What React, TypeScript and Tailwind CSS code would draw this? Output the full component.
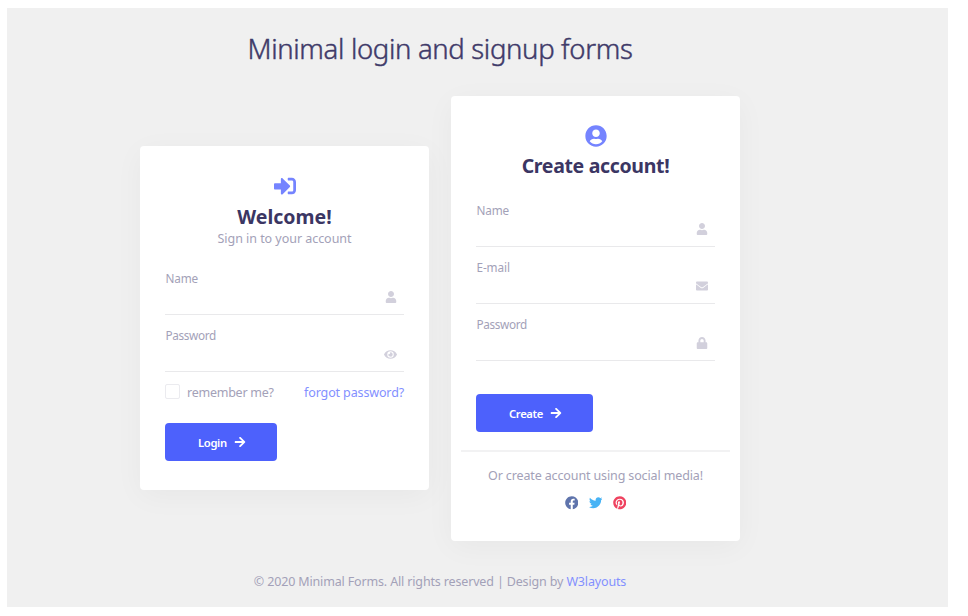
import type { ReactNode } from "react";
import {
  FaArrowRight,
  FaEnvelope,
  FaEye,
  FaFacebook,
  FaLock,
  FaPinterest,
  FaSignInAlt,
  FaTwitter,
  FaUser,
  FaUserCircle,
} from "react-icons/fa";

function Card({ className, children }: { className: string; children: ReactNode }) {
  return (
    <section
      className={`flex w-[289px] flex-col rounded bg-white px-[25px] shadow-[0_6px_30px_rgba(0,10,10,0.04)] ${className}`}
    >
      {children}
    </section>
  );
}

function Field({ label, icon, className }: { label: string; icon: ReactNode; className: string }) {
  return (
    <div className="flex h-[46px] flex-col border-b border-[#e9e9eb]">
      <label className={`h-[18px] pl-[0.5px] text-[11.75px] leading-[18px] whitespace-nowrap text-[#a3a1b8] ${className}`}>
        {label}
      </label>
      <div className="mt-1 flex h-3 items-center justify-end pr-[7px] text-[12px] text-[#d2d0dc]">{icon}</div>
    </div>
  );
}

function Submit({ label, className }: { label: string; className: string }) {
  return (
    <button
      className={`flex h-[38px] shrink-0 items-center justify-between rounded bg-[#4d61fc] pr-[31px] pl-[33px] text-[11.25px] font-semibold text-white ${className}`}
    >
      <span className="pt-[2px]">{label}</span>
      <FaArrowRight className="size-3" />
    </button>
  );
}

export default function App() {
  return (
    <div className="h-[616px] bg-white pt-2 pl-[7px] font-['Noto_Sans','Open_Sans',sans-serif]">
      <main className="h-[599px] w-[941px] overflow-hidden bg-[#f0f0f0] pt-[20px] pl-[133px]">
        <div className="flex w-[600px] flex-col items-center">
          <h1 className="h-[42px] text-[27.5px] leading-[42px] font-light tracking-[-0.34px] whitespace-nowrap text-[#3f3a69] [-webkit-text-stroke:0.45px_#3f3a69]">
            Minimal login and signup forms
          </h1>

          <div className="mt-[26px] flex h-[445px] w-full items-start justify-between">
            <Card className="mt-[50px] h-[344px] pt-[29px]">
              <header className="flex flex-col items-center">
                <FaSignInAlt className="size-[22px] text-[#7584ff]" />
                <h2 className="mt-[6px] h-[26px] text-[19.5px] leading-[27px] font-bold text-[#3b3663]">
                  Welcome!
                </h2>
                <p className="mt-px h-[18px] text-[12.5px] leading-[18px] tracking-[-0.04px] text-[#a3a1b8]">
                  Sign in to your account
                </p>
              </header>
              <form className="mt-[21px] flex flex-col">
                <div className="flex flex-col gap-[11px]">
                  <Field label="Name" icon={<FaUser />} className="tracking-[-0.15px]" />
                  <Field label="Password" icon={<FaEye className="size-[13px]" />} className="tracking-[-0.35px]" />
                </div>
                <div className="mt-3 flex h-[18px] items-start justify-between text-[12.5px] leading-[17px]">
                  <label className="flex gap-[7px] tracking-[-0.25px] text-[#a3a1b8]">
                    <span className="size-[15px] rounded-[2px] border border-[#ebebef] bg-white" />
                    remember me?
                  </label>
                  <a className="tracking-[-0.13px] text-[#8390ff]">forgot password?</a>
                </div>
                <Submit label="Login" className="mt-[21px] w-[112px] tracking-[-0.35px]" />
              </form>
            </Card>

            <Card className="h-[445px] pt-[29px]">
              <header className="flex flex-col items-center">
                <FaUserCircle className="size-[22px] text-[#7584ff]" />
                <h2 className="mt-[5px] h-[26px] text-[19.5px] leading-[27px] font-bold tracking-[-0.33px] text-[#3b3663]">
                  Create account!
                </h2>
              </header>
              <form className="mt-[23px] flex flex-col">
                <div className="flex flex-col gap-[11px]">
                  <Field label="Name" icon={<FaUser />} className="tracking-[-0.15px]" />
                  <Field label="E-mail" icon={<FaEnvelope />} className="tracking-[-0.1px]" />
                  <Field label="Password" icon={<FaLock />} className="tracking-[-0.35px]" />
                </div>
                <Submit label="Create" className="mt-[33px] w-[117px] tracking-[-0.35px]" />
              </form>
              <footer className="-mx-[15px] mt-[18px] flex flex-col items-center border-t-2 border-[#f2f2f3] pt-[15px]">
                <p className="h-[18px] text-[12.5px] leading-[18px] tracking-[-0.13px] whitespace-nowrap text-[#a3a1b8]">
                  Or create account using social media!
                </p>
                <div className="mt-[11px] flex gap-[10.5px] text-[13.5px]">
                  <FaFacebook className="text-[#5f74ac]" />
                  <FaTwitter className="text-[#47b3f5]" />
                  <FaPinterest className="text-[#ef4360]" />
                </div>
              </footer>
            </Card>
          </div>

          <p className="mt-8 h-[18px] text-[12.5px] leading-[18px] tracking-[-0.15px] whitespace-nowrap text-[#a3a1b8]">
            © 2020 Minimal Forms. All rights reserved | Design by{" "}
            <a className="text-[#8390ff]">W3layouts</a>
          </p>
        </div>
      </main>
    </div>
  );
}
